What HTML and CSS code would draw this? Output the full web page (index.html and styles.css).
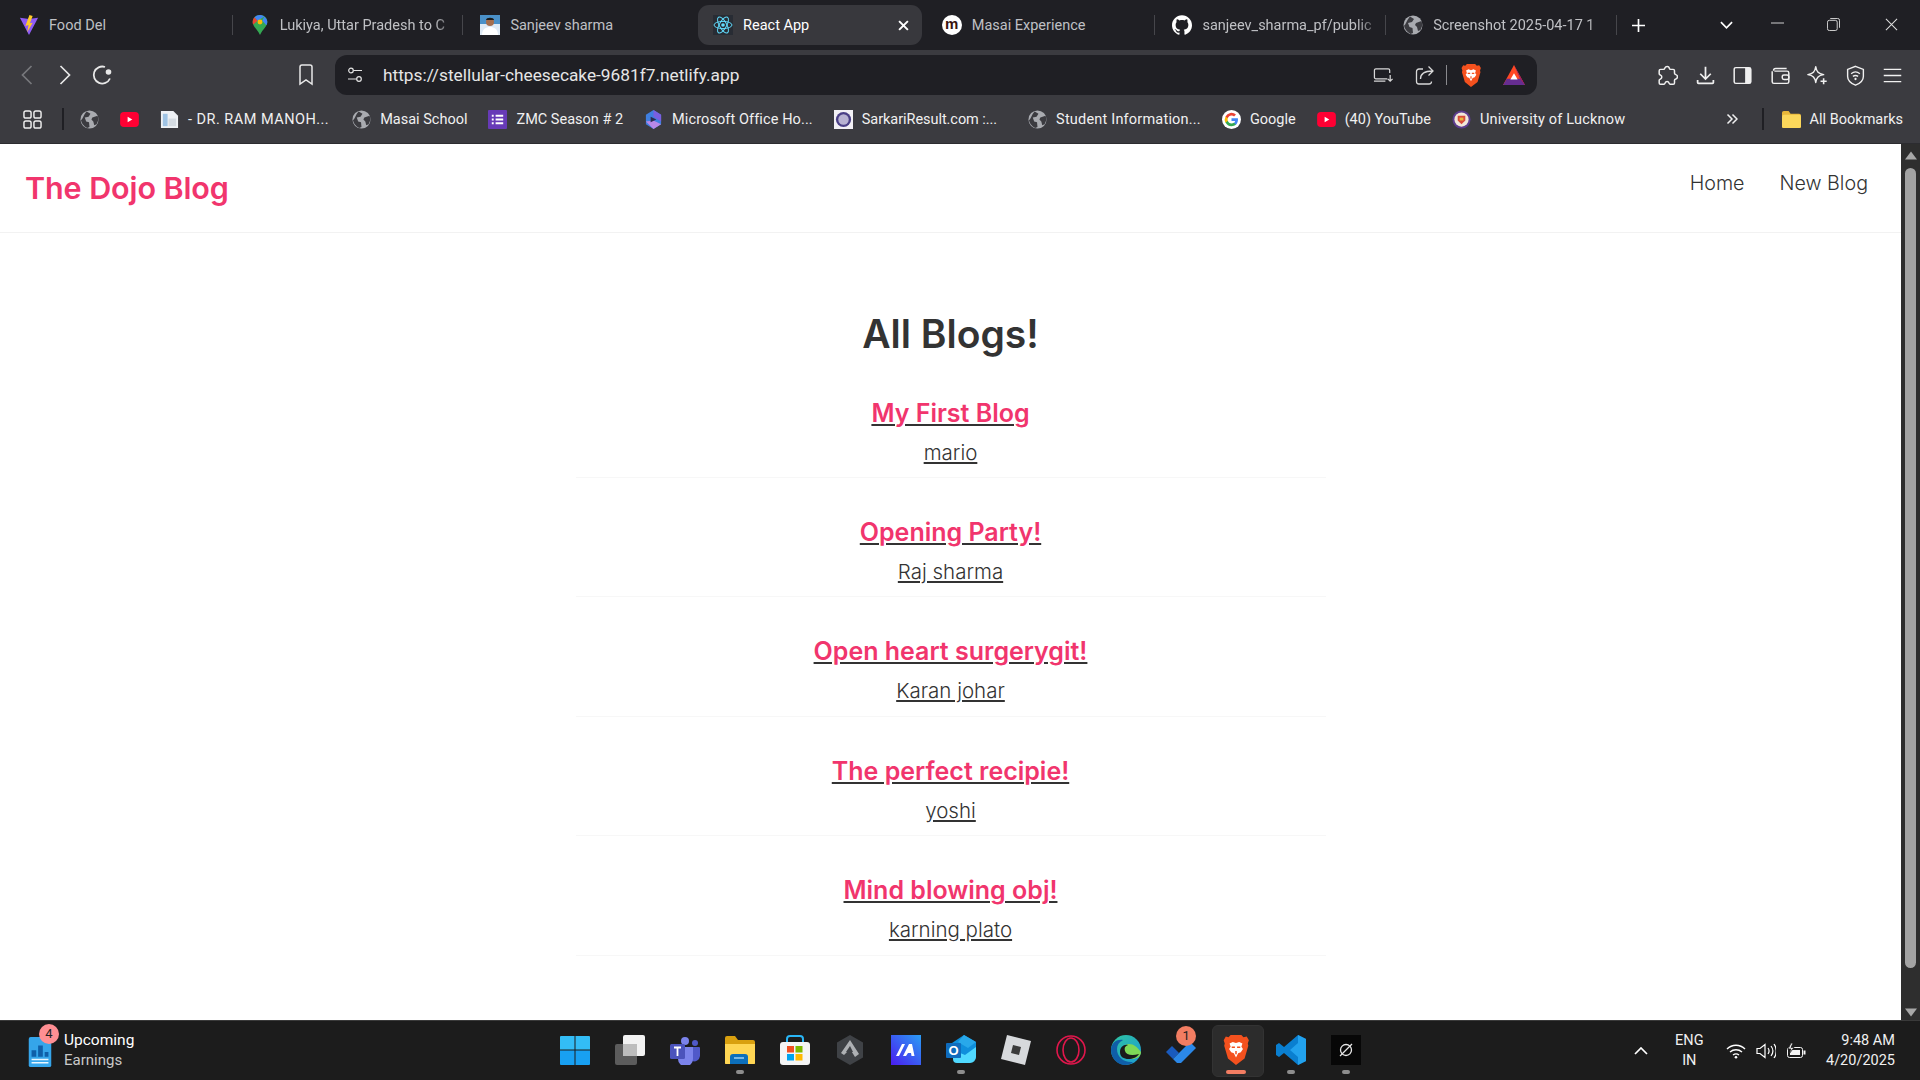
FILE: index.html
```html
<!DOCTYPE html>
<html lang="en">
<head>
<meta charset="utf-8">
<title>React App</title>
<link rel="stylesheet" href="styles.css">
</head>
<body>
<svg class="defs" aria-hidden="true">
  <symbol id="globe" viewBox="0 0 20 20"><circle cx="10" cy="10" r="9.500" fill="#a9abb0"/><path d="M7 1.500 11 4 9 7 5 8 6.500 12l3 1 .5 5-2.500 1C4 17 1.500 14 1 10.500 3 10 3 6 7 1.500ZM13 8l5.500-2 1 4-2 5-2.500 1-1-4-2-2Z" fill="#3b3b40"/></symbol>
  <symbol id="yt" viewBox="0 0 20 16"><rect width="20" height="16" rx="4" fill="#ff0033"/><path d="M8 5l5 3-5 3Z" fill="#fff"/></symbol>
  <symbol id="brave" viewBox="0 0 24 28"><path d="M7 0h10l2 2 3-.5 2 3.500-1 3 .5 2-3.500 12L12 28 4.500 22 1 10l.5-2-1-3 2-3.500L5 2Z" fill="#f4511e"/><path d="M6 8l3-1.500 3 1 3-1L18 8l-1 3 1.500 2-2 3-2.500 1-2 4-2-4-2.500-1-2-3L7 11Z" fill="#fff"/><path d="M8 11.500h3M13 11.500h3M12 15v3" stroke="#f4511e" stroke-width="1.400" fill="none"/></symbol>
</svg>

<header class="chrome">
  <div class="tabstrip">
    <div class="tab"><div class="tab-in">
      <svg class="fav" viewBox="0 0 20 22"><path d="M0 3 10 4.500 20 3 10 22Z" fill="#8f5cf6"/><path d="M10.500 0 14 1 11 9l3-.5L8 19l1.500-8L6 12Z" fill="#ffca28"/></svg>
      <span class="tab-text">Food Del</span></div></div>
    <div class="tab"><div class="tab-in">
      <svg class="fav" viewBox="0 0 20 26"><path d="M10 0c5.500 0 9.500 4 9.500 9 0 6-6 9-9.500 17C6.500 18 .5 15 .5 9 .5 4 4.500 0 10 0Z" fill="#34a853"/><path d="M3 3l4 4.500-6 5C.5 11.500.5 10 .5 9 .5 6.500 1.500 4.500 3 3Z" fill="#ea4335"/><path d="M3 3c2-2 4-3 7-3 2 0 4 .7 5.500 2L7 7.500Z" fill="#4285f4"/><path d="M15.500 2C18 4 19.500 6.500 19.500 9c0 1.500-.5 3-1.300 4.300L13 7.500Z" fill="#4285f4"/><circle cx="10" cy="9" r="3.200" fill="#fbbc04"/></svg>
      <span class="tab-text tab-fade">Lukiya, Uttar Pradesh to C</span></div></div>
    <div class="tab tab-noline"><div class="tab-in">
      <svg class="fav" viewBox="0 0 20 20"><rect width="20" height="20" fill="#dfeaf5"/><rect width="20" height="9" fill="#4a90c8"/><circle cx="10" cy="7" r="4" fill="#a56e4d"/><path d="M6 5c0-3 8-3 8 0Z" fill="#1b1b1b"/><path d="M2 20c0-6 4-8 8-8s8 2 8 8Z" fill="#fff"/></svg>
      <span class="tab-text">Sanjeev sharma</span></div></div>
    <div class="tab tab-noline tab-active"><div class="tab-in">
      <svg class="fav" viewBox="0 0 20 20"><rect width="20" height="20" fill="#282c34"/><g fill="none" stroke="#61dafb" stroke-width="1"><ellipse cx="10" cy="10" rx="9" ry="3.600"/><ellipse cx="10" cy="10" rx="9" ry="3.600" transform="rotate(60 10 10)"/><ellipse cx="10" cy="10" rx="9" ry="3.600" transform="rotate(120 10 10)"/></g><circle cx="10" cy="10" r="1.800" fill="#61dafb"/></svg>
      <span class="tab-text">React App</span>
      <svg class="tab-close" viewBox="0 0 10 10"><path d="M1 1l8 8M9 1l-8 8" stroke="#fff" stroke-width="1.800"/></svg></div></div>
    <div class="tab"><div class="tab-in">
      <span class="masai">m</span>
      <span class="tab-text">Masai Experience</span></div></div>
    <div class="tab"><div class="tab-in">
      <svg class="fav" viewBox="0 0 24 24"><path fill="#fff" d="M12 .297c-6.630 0-12 5.373-12 12 0 5.303 3.438 9.800 8.205 11.385.6.113.82-.258.82-.577 0-.285-.01-1.040-.015-2.040-3.338.724-4.042-1.610-4.042-1.610C4.422 18.070 3.633 17.700 3.633 17.700c-1.087-.744.084-.729.084-.729 1.205.084 1.838 1.236 1.838 1.236 1.070 1.835 2.809 1.305 3.495.998.108-.776.417-1.305.76-1.605-2.665-.3-5.466-1.332-5.466-5.930 0-1.310.465-2.380 1.235-3.220-.135-.303-.54-1.523.105-3.176 0 0 1.005-.322 3.300 1.230.96-.267 1.980-.399 3-.405 1.020.006 2.040.138 3 .405 2.280-1.552 3.285-1.230 3.285-1.230.645 1.653.24 2.873.12 3.176.765.84 1.230 1.910 1.230 3.220 0 4.610-2.805 5.625-5.475 5.920.42.36.81 1.096.81 2.220 0 1.606-.015 2.896-.015 3.286 0 .315.21.69.825.57C20.565 22.092 24 17.592 24 12.297c0-6.627-5.373-12-12-12"/></svg>
      <span class="tab-text tab-fade">sanjeev_sharma_pf/public</span></div></div>
    <div class="tab"><div class="tab-in">
      <svg class="fav"><use href="#globe"/></svg>
      <span class="tab-text tab-fade">Screenshot 2025-04-17 1</span></div></div>
    <svg class="newtab" viewBox="0 0 14 14"><path d="M7 0v14M0 7h14" stroke="#fff" stroke-width="1.800"/></svg>
    <div class="winctl">
      <svg class="wc wc-chev" viewBox="0 0 14 8"><path d="M1 1l6 6 6-6" fill="none" stroke="#fff" stroke-width="1.800"/></svg>
      <svg class="wc wc-min" viewBox="0 0 14 2"><path d="M0 1h14" stroke="#ddd" stroke-width="1"/></svg>
      <svg class="wc wc-max" viewBox="0 0 14 14"><rect x=".5" y="2.500" width="10.500" height="11" rx="2" fill="none" stroke="#ddd"/><path d="M3.500 .5h8a2 2 0 0 1 2 2v8" fill="none" stroke="#ddd"/></svg>
      <svg class="wc wc-close" viewBox="0 0 14 14"><path d="M1 1l12 12M13 1 1 13" stroke="#ddd" stroke-width="1.100"/></svg>
    </div>
  </div>

  <div class="toolbar">
    <svg class="tool tool-back" viewBox="0 0 12 20"><path d="M10.500 1 1.500 10l9 9" fill="none" stroke="#77787c" stroke-width="1.700"/></svg>
    <svg class="tool tool-fwd" viewBox="0 0 12 20"><path d="M1.500 1l9 9-9 9" fill="none" stroke="#e8e8e8" stroke-width="1.700"/></svg>
    <svg class="tool tool-reload" viewBox="0 0 22 22"><path d="M18 14.500A8.500 8.500 0 1 1 13 3" fill="none" stroke="#e8e8e8" stroke-width="1.800"/><circle cx="16.500" cy="8" r="2.800" fill="#e8e8e8"/></svg>
    <svg class="tool tool-mark" viewBox="0 0 16 22"><path d="M2 3a2 2 0 0 1 2-2h8a2 2 0 0 1 2 2v17l-6-4-6 4Z" fill="none" stroke="#e8e8e8" stroke-width="1.500"/></svg>
    <div class="omnibox">
      <svg class="om-tune" viewBox="0 0 16 16"><g fill="none" stroke="#e4e4e4" stroke-width="1.200"><circle cx="4" cy="3.500" r="2.300"/><path d="M6.500 3.500H15M1 12h8.500"/><circle cx="12" cy="12" r="2.300"/></g></svg>
      <span class="url">https://stellular-cheesecake-9681f7.netlify.app</span>
      <span class="om-space"></span>
      <svg class="om-cast" viewBox="0 0 22 16"><path d="M15 12H3a1.500 1.500 0 0 1-1.500-1.500V3A1.500 1.500 0 0 1 3 1.500h13A1.500 1.500 0 0 1 17.500 3v3M1 14.500h12M18 8v6M15.500 12l2.500 2.500 2.500-2.500" fill="none" stroke="#d8d8d8" stroke-width="1.300"/></svg>
      <svg class="om-share" viewBox="0 0 20 20"><path d="M8 4H4a2.500 2.500 0 0 0-2.500 2.500v10A2.500 2.500 0 0 0 4 19h10a2.500 2.500 0 0 0 2.500-2.500M5.500 14c0-5 4-8 12-8M13.500 1.500 18 6l-4.500 4.500" fill="none" stroke="#d8d8d8" stroke-width="1.300"/></svg>
      <span class="om-sep"></span>
      <svg class="om-brave"><use href="#brave"/></svg>
      <svg class="om-bat" viewBox="0 0 24 22"><path d="M12 0 24 22H0Z" fill="#ff4724"/><path d="M0 22h24l-4-7H4Z" fill="#662d91"/><path d="M12 0l12 22-5-6Z" fill="#9e1f63"/><path d="M12 9l4 7H8Z" fill="#fff"/></svg>
    </div>
    <div class="tool-right">
      <svg class="tr" viewBox="0 0 24 24"><path d="M9 3.500c1-2.500 4.500-2.500 5 0 .3 1 .3 1.500 1.500 1.500h3a1.500 1.500 0 0 1 1.500 1.500v3c0 1 .5 1.200 1.500 1.500 2.500.8 2.500 4 0 5-1 .3-1.500.5-1.500 1.500v3a1.500 1.500 0 0 1-1.500 1.500h-3.500c-1 0-1-1-1.300-1.600-.8-2-3.600-2-4.400 0-.3.6-.3 1.600-1.300 1.600H4a1.500 1.500 0 0 1-1.500-1.500v-3c0-1 .8-1.200 1.500-1.500 2-1 2-3.500 0-4.500-.8-.3-1.500-.5-1.500-1.500V6.500A1.500 1.500 0 0 1 4 5h3.500C8.500 5 8.700 4.500 9 3.500Z" fill="none" stroke="#f0f0f0" stroke-width="1.700"/></svg>
      <svg class="tr" viewBox="0 0 24 24"><path d="M12 2v14M6 10l6 6 6-6" fill="none" stroke="#f0f0f0" stroke-width="2"/><path d="M3 17v3a1 1 0 0 0 1 1h16a1 1 0 0 0 1-1v-3" fill="none" stroke="#f0f0f0" stroke-width="2"/></svg>
      <svg class="tr" viewBox="0 0 24 24"><rect x="2.500" y="3" width="19" height="18" rx="2" fill="none" stroke="#f0f0f0" stroke-width="1.700"/><path d="M15 3h5a1.500 1.500 0 0 1 1.500 1.500v15A1.500 1.500 0 0 1 20 21h-5Z" fill="#f0f0f0"/></svg>
      <svg class="tr" viewBox="0 0 24 24"><path d="M4 6.500A2.500 2.500 0 0 1 6.500 4H19M2.500 7v12A2 2 0 0 0 4.500 21h15a2 2 0 0 0 2-2V9a2 2 0 0 0-2-2H5" fill="none" stroke="#f0f0f0" stroke-width="1.700"/><rect x="14" y="11.500" width="7.500" height="5" rx="2" fill="none" stroke="#f0f0f0" stroke-width="1.700"/></svg>
      <svg class="tr" viewBox="0 0 24 24"><path d="M10 2c1 6 3 8 9 9-6 1-8 3-9 9-1-6-3-8-9-9 6-1 8-3 9-9Z" fill="none" stroke="#f0f0f0" stroke-width="1.700" stroke-linejoin="round"/><path d="M19 15v7M15.500 18.500h7" stroke="#f0f0f0" stroke-width="1.800"/></svg>
      <svg class="tr" viewBox="0 0 24 24"><path d="M12 1.500 21 5v8c0 5-4 8-9 10-5-2-9-5-9-10V5Z" fill="none" stroke="#f0f0f0" stroke-width="1.600"/><path d="M7 10c3-2.500 7-2.500 10 0M9 13c2-1.400 4-1.400 6 0" fill="none" stroke="#f0f0f0" stroke-width="1.500"/><circle cx="12" cy="16" r="1.300" fill="#f0f0f0"/></svg>
      <svg class="tr" viewBox="0 0 24 24"><path d="M2 5h20M2 12h20M2 19h20" stroke="#f0f0f0" stroke-width="1.700"/></svg>
    </div>
  </div>

  <div class="bookmarks">
    <svg class="bm-apps" viewBox="0 0 20 20"><g fill="none" stroke="#f0f0f0" stroke-width="1.500"><rect x="1" y="1" width="7.500" height="7.500" rx="2"/><rect x="11.500" y="1" width="7.500" height="7.500" rx="2"/><rect x="1" y="11.500" width="7.500" height="7.500" rx="2"/><rect x="11.500" y="11.500" width="7.500" height="7.500" rx="2"/></g></svg>
    <span class="bm-div bm-div1"></span>
    <svg class="bm-ic"><use href="#globe"/></svg>
    <svg class="bm-ic bm-yt"><use href="#yt"/></svg>
    <div class="bm"><svg class="bm-ic" viewBox="0 0 20 20"><path d="M1 1h13l5 5v13H1Z" fill="#eef1f5"/><path d="M3 4h5v13H3Z" fill="#9fc3e4"/><path d="M9 9h8v8H9Z" fill="#d4dbe2"/></svg><span class="bm-doc">- DR. RAM MANOH...</span></div>
    <div class="bm"><svg class="bm-ic"><use href="#globe"/></svg><span>Masai School</span></div>
    <div class="bm"><svg class="bm-ic" viewBox="0 0 20 20"><rect width="20" height="20" rx="1" fill="#673ab7"/><path d="M4 6h2M8 6h8M4 10h2M8 10h8M4 14h2M8 14h8" stroke="#fff" stroke-width="2"/></svg><span>ZMC Season # 2</span></div>
    <div class="bm"><svg class="bm-ic" viewBox="0 0 20 20"><path d="M10 0 18 5v10l-8 5-8-5V5Z" fill="#3f7fe0"/><path d="M10 0 18 5v7L10 7Z" fill="#7a5fe0"/><path d="M2 12l8 8 8-5-8-4Z" fill="#b888e8"/><path d="M7 7l6 3-6 3Z" fill="#2c2c50"/></svg><span class="bm-ms">Microsoft Office Ho...</span></div>
    <div class="bm"><svg class="bm-ic" viewBox="0 0 20 20"><rect width="20" height="20" fill="#f2f0f5"/><circle cx="10" cy="10" r="8" fill="#4a3f86"/><circle cx="10" cy="10" r="5.500" fill="#b8b2d2"/></svg><span class="bm-sr">SarkariResult.com :...</span></div>
    <div class="bm"><svg class="bm-ic"><use href="#globe"/></svg><span class="bm-si">Student Information...</span></div>
    <div class="bm"><svg class="bm-ic" viewBox="0 0 20 20"><circle cx="10" cy="10" r="10" fill="#fff"/><path d="M16.800 10.200c0-.5 0-1-.1-1.400H10v2.700h3.800a3.300 3.300 0 0 1-1.400 2.100v1.800h2.300c1.300-1.200 2.100-3 2.100-5.200Z" fill="#4285f4"/><path d="M10 17c1.900 0 3.500-.6 4.700-1.700l-2.300-1.800c-.6.400-1.400.7-2.400.7-1.800 0-3.400-1.200-3.900-2.900H3.700v1.900A7 7 0 0 0 10 17Z" fill="#34a853"/><path d="M6.100 11.400a4.200 4.200 0 0 1 0-2.700V6.800H3.700a7 7 0 0 0 0 6.500Z" fill="#fbbc04"/><path d="M10 5.800c1 0 2 .4 2.700 1l2-2A7 7 0 0 0 3.700 6.800l2.400 1.900C6.600 7 8.200 5.800 10 5.800Z" fill="#ea4335"/></svg><span>Google</span></div>
    <div class="bm"><svg class="bm-ic bm-yt"><use href="#yt"/></svg><span>(40) YouTube</span></div>
    <div class="bm"><svg class="bm-ic" viewBox="0 0 20 20"><circle cx="10" cy="10" r="9.500" fill="#5c3d8f"/><circle cx="10" cy="10" r="7.500" fill="#f0e7d8"/><path d="M6 6h8v5l-4 4-4-4Z" fill="#d84a3a"/><path d="M8 8h4v3H8Z" fill="#e4b73e"/></svg><span class="bm-ul">University of Lucknow</span></div>
    <span class="bm-space"></span>
    <svg class="bm-more" viewBox="0 0 12 12"><path d="M1.500 1.500 6 6l-4.500 4.500M6.500 1.500 11 6l-4.500 4.500" fill="none" stroke="#f0f0f0" stroke-width="1.500"/></svg>
    <span class="bm-div bm-div2"></span>
    <div class="bm bm-last"><svg class="bm-ic" viewBox="0 0 20 18"><path d="M0 2a2 2 0 0 1 2-2h5l2 3h9a2 2 0 0 1 2 2v11a2 2 0 0 1-2 2H2a2 2 0 0 1-2-2Z" fill="#e8b73a"/><rect y="4" width="20" height="14" rx="2" fill="#fbd75b"/></svg><span>All Bookmarks</span></div>
  </div>
</header>

<div class="viewport">
  <main class="page">
    <nav class="navbar">
      <h1 class="brand">The Dojo Blog</h1>
      <div class="links"><a href="#">Home</a><a href="#">New Blog</a></div>
    </nav>
    <section class="content">
      <h2 class="heading">All Blogs!</h2>
      <article class="preview"><a href="#"><h3>My First Blog</h3><p>mario</p></a></article>
      <article class="preview"><a href="#"><h3>Opening Party!</h3><p>Raj sharma</p></a></article>
      <article class="preview"><a href="#"><h3>Open heart surgerygit!</h3><p>Karan johar</p></a></article>
      <article class="preview"><a href="#"><h3>The perfect recipie!</h3><p>yoshi</p></a></article>
      <article class="preview"><a href="#"><h3>Mind blowing obj!</h3><p>karning plato</p></a></article>
    </section>
  </main>
  <div class="scrollbar">
    <svg class="sb-arrow" viewBox="0 0 12 8"><path d="M6 0l6 8H0Z" fill="#a8a8a8"/></svg>
    <div class="sb-thumb"></div>
    <svg class="sb-arrow sb-down" viewBox="0 0 12 8"><path d="M6 8 0 0h12Z" fill="#a8a8a8"/></svg>
  </div>
</div>

<footer class="taskbar">
  <div class="widget">
    <svg class="wg-ic" viewBox="0 0 24 32"><rect width="24" height="32" rx="2" fill="#35a5ea"/><path d="M3 21v-7h5v7ZM10 21V9h5v12ZM17 21v-5h4v5Z" fill="#0f5fa8"/><path d="M3 24h18M3 27.500h18" stroke="#e8f6ff" stroke-width="1.600"/></svg>
    <span class="wg-badge">4</span>
    <div class="wg-text"><span class="wg-top">Upcoming</span><span class="wg-sub">Earnings</span></div>
  </div>
  <div class="tb-icons">
    <div class="tb"><svg viewBox="0 0 30 30"><path d="M1 1h13.500v13.500H0V2a1 1 0 0 1 1-1ZM15.500 1H29a1 1 0 0 1 1 1v12.500H15.500Z" fill="#33bdf6"/><path d="M0 15.500h14.500V30H1a1 1 0 0 1-1-1ZM15.500 15.500H30V29a1 1 0 0 1-1 1H15.500Z" fill="#18a0f2"/></svg></div>
    <div class="tb"><svg viewBox="0 0 30 30"><rect x="8" y="0" width="22" height="21" rx="2" fill="#f2f2f2"/><rect x="0" y="9" width="22" height="21" rx="2" fill="#5c5c5c"/><rect x="8" y="9" width="14" height="12" fill="#bdbdbd"/></svg></div>
    <div class="tb"><svg viewBox="0 0 30 30"><circle cx="15" cy="6" r="4" fill="#7b83eb"/><circle cx="25" cy="8" r="3" fill="#5059c9"/><path d="M20 12h9a1 1 0 0 1 1 1v8a6 6 0 0 1-8 5Z" fill="#5059c9"/><path d="M8 12h15v12a7.500 7.500 0 0 1-15 0Z" fill="#7b83eb"/><rect y="9" width="15" height="15" rx="1.500" fill="#4b53bc"/><path d="M4 12.500h7M7.500 12.500V21" stroke="#fff" stroke-width="1.800"/></svg></div>
    <div class="tb tb-run"><svg viewBox="0 0 30 30"><path d="M0 3a2 2 0 0 1 2-2h8l3 4h15a2 2 0 0 1 2 2v21a1 1 0 0 1-1 1H1a1 1 0 0 1-1-1Z" fill="#d9a00f"/><path d="M0 9h30v19a1 1 0 0 1-1 1H1a1 1 0 0 1-1-1Z" fill="#ffd654"/><path d="M5 29v-7a3 3 0 0 1 3-3h12a3 3 0 0 1 3 3v7Z" fill="#0c6fbb"/><path d="M9 23h10" stroke="#9bd1f5" stroke-width="1.500"/></svg></div>
    <div class="tb"><svg viewBox="0 0 30 30"><path d="M7 8V4a3 3 0 0 1 3-3h10a3 3 0 0 1 3 3v4" fill="none" stroke="#29b6f6" stroke-width="2"/><rect y="7" width="30" height="23" rx="3" fill="#f5f5f5"/><rect x="7" y="11" width="7" height="6.500" fill="#f25022"/><rect x="15.500" y="11" width="7" height="6.500" fill="#7fba00"/><rect x="7" y="19" width="7" height="6.500" fill="#00a4ef"/><rect x="15.500" y="19" width="7" height="6.500" fill="#ffb900"/></svg></div>
    <div class="tb"><svg viewBox="0 0 30 30"><path d="M15 0 28 7.500v15L15 30 2 22.500v-15Z" fill="#3f4246"/><path d="M15 5 24 19l-4 3-5-8-6 6-3-2Z" fill="#aeb1b4"/><path d="M15 11l3 6h-7Z" fill="#3f4246"/></svg></div>
    <div class="tb"><svg viewBox="0 0 30 30"><defs><linearGradient id="mg" x1="0" y1="1" x2="1" y2="0"><stop offset="0" stop-color="#4a1cf0"/><stop offset="1" stop-color="#2a9df4"/></linearGradient></defs><rect width="30" height="30" fill="url(#mg)"/><path d="M5 21 11 9h3L8 21ZM12 21 18 9h3l2.500 12h-3l-.5-3h-3l-2 3Z" fill="#fff"/></svg></div>
    <div class="tb tb-run"><svg viewBox="0 0 30 30"><path d="M6 8 18 0l12 7v14a5 5 0 0 1-5 5H12a5 5 0 0 1-5-5Z" fill="#0f8fdc"/><path d="M18 0l12 7-8 6-10-6Z" fill="#28a8ea"/><path d="M7 15l12 5 11-8v10a6 6 0 0 1-6 6H11a4 4 0 0 1-4-4Z" fill="#50d9ff"/><rect y="8" width="15" height="15" rx="1" fill="#0f6cbd"/><text x="7.500" y="20" class="ol">O</text></svg></div>
    <div class="tb"><svg viewBox="0 0 30 30"><path d="M6 0 30 6l-6 24L0 24Z" fill="#d7d9dc"/><path d="M12 10l8 2-2 8-8-2Z" fill="#3a3a3a"/></svg></div>
    <div class="tb"><svg viewBox="0 0 30 30"><g fill="none" stroke="#e0174c" stroke-width="1.600"><circle cx="15" cy="15" r="14"/><ellipse cx="15" cy="15" rx="8" ry="12"/></g></svg></div>
    <div class="tb"><svg viewBox="0 0 30 30"><defs><linearGradient id="eg" x1="0" y1="0" x2="1" y2="1"><stop offset="0" stop-color="#2fc6a0"/><stop offset="1" stop-color="#1c9ad6"/></linearGradient></defs><circle cx="15" cy="15" r="15" fill="url(#eg)"/><path d="M30 17c0 5-5 7-9 7-6 0-10-3-10-8 0-4 3-7 7-7 5 0 8 3 12 8Z" fill="#7ed957"/><path d="M0 15C0 7 7 4 12 5c-4 2-6 5-6 9 0 8 7 14 16 13-2 2-5 3-8 3C6 30 0 23 0 15Z" fill="#0f5ea8"/><path d="M9 17c0-5 4-8 8-7-3 1-4 3-3 6 1 4 7 5 14 3-3 6-19 8-19-2Z" fill="#1b1b1b"/></svg></div>
    <div class="tb tb-wide"><svg class="todo" viewBox="0 0 30 24"><path d="M0 13 6 7l7 7-6 6Z" fill="#195abd"/><path d="M7 20 24 3l6 6-17 17Z" fill="#2b88e8"/></svg><span class="tb-badge">1</span></div>
    <div class="tb tb-active"><svg class="tb-bravei"><use href="#brave"/></svg><span class="tb-line"></span></div>
    <div class="tb tb-run"><svg viewBox="0 0 30 30"><path d="M22 0 30 4v22l-8 4-14-12-5 4-3-2V10l3-2 5 4Z" fill="#0a7fd0"/><path d="M22 0 30 4v22l-8 4Zm0 8-8 7 8 7Z" fill="#22a2ee" fill-rule="evenodd"/></svg></div>
    <div class="tb tb-run"><svg viewBox="0 0 30 30"><rect width="30" height="30" fill="#070707"/><circle cx="15" cy="15" r="5.500" fill="none" stroke="#e6e6e6" stroke-width="1.300"/><path d="M9 21 21 9" stroke="#e6e6e6" stroke-width="1.300"/></svg></div>
  </div>
  <div class="tray">
    <svg class="tray-chev" viewBox="0 0 14 8"><path d="M1 7l6-6 6 6" fill="none" stroke="#fff" stroke-width="1.700"/></svg>
    <div class="lang"><span>ENG</span><span>IN</span></div>
    <svg class="tray-ic" viewBox="0 0 20 16"><path d="M1 6c5-5 13-5 18 0M4 9c3.500-3 8.500-3 12 0M7 12c2-1.500 4-1.500 6 0" fill="none" stroke="#fff" stroke-width="1.400"/><circle cx="10" cy="14.300" r="1.300" fill="#fff"/></svg>
    <svg class="tray-ic" viewBox="0 0 20 16"><path d="M1 5.500h3L9 1.500v13l-5-4H1Z" fill="none" stroke="#fff" stroke-width="1.200"/><path d="M12 5c1.300 1.800 1.300 4.200 0 6M15 3c2.300 3 2.300 7 0 10M18 1c3 4 3 10 0 14" fill="none" stroke="#fff" stroke-width="1.200"/></svg>
    <svg class="tray-ic" viewBox="0 0 20 16"><rect x="1.500" y="4.500" width="15" height="10" rx="2" fill="#1c1c1c" stroke="#f4f4f4"/><rect x="4" y="7" width="10" height="5" fill="#f4f4f4"/><rect x="17.500" y="7.500" width="2" height="4" fill="#f4f4f4"/><path d="M5 0 2 6h3L3 11l5-6.500H5L7 0Z" fill="#f4f4f4" stroke="#1c1c1c" stroke-width=".8"/></svg>
    <div class="clock"><span>9:48 AM</span><span>4/20/2025</span></div>
  </div>
</footer>
</body>
</html>
```

FILE: styles.css
```css
* { box-sizing: border-box; }
html, body { margin: 0; height: 100%; }
body {
  width: 1920px;
  height: 1080px;
  overflow: hidden;
  display: flex;
  flex-direction: column;
  font-family: Roboto, "Liberation Sans", sans-serif;
  background: #fff;
}
.defs { display: none; }

/* Browser chrome */
.chrome { flex: 0 0 144px; display: flex; flex-direction: column; background: #3b3b40; border-bottom: 1px solid #2c2c30; }
.tabstrip { flex: 0 0 50px; display: flex; align-items: center; padding-left: 2px; background: #1f1f24; }
.tab { flex: 0 0 230.700px; min-width: 0; height: 50px; padding: 5px 4px 5px 3px; position: relative; }
.tab::after { content: ""; position: absolute; right: 0; top: 15px; height: 20px; width: 1px; background: #46464b; }
.tab-noline::after { display: none; }
.tab-in { height: 40px; display: flex; align-items: center; gap: 10px; padding-left: 14px; padding-right: 0; border-radius: 11px; }
.tab-active { padding-left: 4px; padding-right: 3px; }
.tab-active .tab-in { background: #38383d; padding-left: 15px; padding-right: 13px; }
.tab-active .tab-text { color: #fff; }
.fav { width: 20px; height: 20px; flex: none; }
.tab-text {
  flex: 1;
  min-width: 0;
  color: #bfc0c4;
  font-size: 14.500px;
  white-space: nowrap;
}
.tab-fade {
  -webkit-mask-image: linear-gradient(to right, #000 86%, transparent 100%);
  mask-image: linear-gradient(to right, #000 86%, transparent 100%);
}
.tab-close { width: 11px; height: 11px; flex: none; }
.masai { flex: none; width: 20px; height: 20px; border-radius: 50%; background: #fff; color: #3a1410; font: 700 15px/18px "Liberation Sans", sans-serif; text-align: center; }
.newtab { width: 13px; height: 13px; margin-left: 15px; flex: none; }
.winctl { flex: 1; display: flex; align-items: center; height: 50px; }
.wc { flex: none; }
.wc-chev { width: 13px; height: 8px; margin-left: 75px; }
.wc-min { width: 13px; height: 2px; margin-left: 38px; margin-top: -4px; }
.wc-max { width: 13px; height: 13px; margin-left: 43px; margin-top: -2px; }
.wc-close { width: 13px; height: 13px; margin-left: 45px; margin-top: -2px; }

.toolbar { flex: 0 0 45px; display: flex; align-items: center; padding: 5px 0 0 0; }
.tool { flex: none; }
.tool-back { width: 12px; height: 20px; margin-left: 21px; }
.tool-fwd { width: 12px; height: 20px; margin-left: 26px; }
.tool-reload { width: 22px; height: 22px; margin-left: 21px; }
.tool-mark { width: 16px; height: 22px; margin-left: 184px; }
.omnibox { flex: 0 0 1202px; height: 40px; margin-left: 21px; display: flex; align-items: center; background: #1f1f24; border-radius: 12px; padding: 0 12px; }
.om-tune { width: 16px; height: 16px; flex: none; }
.url { margin-left: 20px; color: #e6e6e6; font-size: 17.300px; white-space: nowrap; }
.om-space { flex: 1; }
.om-cast { width: 21px; height: 16px; }
.om-share { width: 20px; height: 20px; margin-left: 21px; }
.om-sep { width: 1px; height: 20px; background: #8a8a8e; margin-left: 11px; }
.om-brave { width: 20px; height: 23px; margin-left: 14px; }
.om-bat { width: 22px; height: 20px; margin-left: 22px; }
.tool-right { display: flex; align-items: center; gap: 16.500px; margin-left: 120px; }
.tr { width: 21px; height: 21px; flex: none; }

.bookmarks { flex: 1; display: flex; align-items: center; padding-left: 23px; gap: 21px; }
.bm-apps { width: 19px; height: 19px; flex: none; }
.bm-div { width: 2px; height: 22px; background: #1f1f24; flex: none; margin-left: -1px; }
.bm-div1 { margin-right: -5px; }
.bm-ic { width: 19px; height: 19px; flex: none; }
.bm-yt { height: 15px; }
.bm { display: flex; align-items: center; gap: 9px; color: #f0f0f0; font-size: 14.500px; white-space: nowrap; flex: none; }
.bm-doc { letter-spacing: .48px; margin-right: 2px; }
.bm-ms { letter-spacing: .1px; }
.bm-sr { letter-spacing: -.05px; margin-right: 10px; }
.bm-si { letter-spacing: .2px; }
.bm-ul { letter-spacing: .2px; }
.bm-space { flex: 1; }
.bm-more { width: 12px; height: 12px; flex: none; }
.bm-div2 { margin-left: 3px; margin-right: -3px; }
.bm-last { margin-right: 17px; }

/* Page */
.viewport { flex: 1; display: flex; min-height: 0; }
.page { flex: 1; min-width: 0; background: #fff; color: #333; font-family: Inter, "Liberation Sans", sans-serif; }
.navbar { height: 89px; display: flex; justify-content: space-between; padding: 0 33px 0 25px; border-bottom: 1px solid #f2f2f2; }
.brand { margin: 0; font-size: 30.500px; font-weight: 600; color: #f1356d; line-height: 88px; letter-spacing: -.1px; }
.links { display: flex; gap: 35px; padding-top: 23px; line-height: 32px; font-size: 19.700px; font-weight: 300; }
.links a { color: #333; text-decoration: none; }
.content { width: 750px; margin: 0 auto; padding-top: 76px; text-align: center; }
.heading { margin: 0 0 24.600px; font-size: 39px; line-height: 50px; font-weight: 600; color: #333; }
.preview { padding: 13px 16px 11.400px; margin-bottom: 25px; border-bottom: 1px solid #f7f7f7; }
.preview a { display: block; color: #333; text-decoration: underline; text-decoration-thickness: 1.500px; text-underline-offset: 2px; }
.preview h3 { margin: 0 0 11px; font-size: 25px; line-height: 32px; font-weight: 600; color: #f1356d; }
.preview p { margin: 0; font-size: 20.500px; line-height: 26px; font-weight: 300; }

.scrollbar { flex: 0 0 19px; background: #2e2e2e; display: flex; flex-direction: column; align-items: center; padding: 7px 0 3px; gap: 8px; }
.sb-arrow { width: 12px; height: 9px; flex: none; }
.sb-thumb { flex: 0 0 800px; width: 11px; background: #a3a3a3; border-radius: 6px; }
.sb-down { margin-top: auto; }

/* Taskbar */
.taskbar { flex: 0 0 60px; display: flex; align-items: center; background: #1c1c1c; border-top: 1px solid #3a3a3a; }
.widget { display: flex; align-items: center; width: 560px; padding-left: 28px; gap: 12px; position: relative; flex: none; }
.wg-ic { width: 24px; height: 30px; flex: none; margin-top: 2px; }
.wg-badge { position: absolute; left: 39px; top: -8px; width: 20px; height: 20px; border-radius: 50%; background: #ff8f93; color: #222; font-size: 13px; line-height: 20px; text-align: center; }
.wg-text { display: flex; flex-direction: column; font-size: 15.500px; line-height: 20px; margin-top: -2px; }
.wg-top { color: #fff; }
.wg-sub { color: #c9c9c9; font-size: 15px; }
.tb-icons { display: flex; align-items: center; gap: 25.100px; flex: none; margin-top: -1px; }
.tb { width: 30px; height: 30px; position: relative; flex: none; }
.tb > svg { width: 30px; height: 30px; display: block; }
.tb-run::after { content: ""; position: absolute; left: 11px; bottom: -9px; width: 8px; height: 4px; border-radius: 2px; background: #8d8d8d; }
.ol { font: 700 13px "Liberation Sans", sans-serif; fill: #fff; text-anchor: middle; }
.tb-wide .todo { width: 30px; height: 24px; margin-top: 4px; }
.tb-badge { position: absolute; left: 10px; top: -9px; width: 20px; height: 20px; border-radius: 50%; background: #f27d62; color: #222; font-size: 13px; line-height: 20px; text-align: center; }
.tb-active::before { content: ""; position: absolute; left: -9px; top: -10px; width: 50px; height: 50px; background: #2c2c2c; border-radius: 6px; border: 1px solid #333; }
.tb > .tb-bravei { width: 26px; height: 30px; position: relative; margin-left: 2px; }
.tb-line { position: absolute; left: 5px; bottom: -9px; width: 20px; height: 4px; border-radius: 2px; background: #f27d62; }
.tray { flex: 1; display: flex; align-items: center; min-width: 0; padding-left: 273px; }
.tray-chev { width: 14px; height: 8px; flex: none; }
.lang { display: flex; flex-direction: column; align-items: center; width: 40px; margin-left: 21px; color: #f0f0f0; font-size: 14.500px; line-height: 20px; }
.tray-ic { width: 20px; height: 16px; flex: none; margin-left: 10px; }
.lang + .tray-ic { margin-left: 17px; }
.clock { display: flex; flex-direction: column; align-items: flex-end; margin-left: auto; margin-right: 25px; color: #f0f0f0; font-size: 14.500px; line-height: 20px; }
```
